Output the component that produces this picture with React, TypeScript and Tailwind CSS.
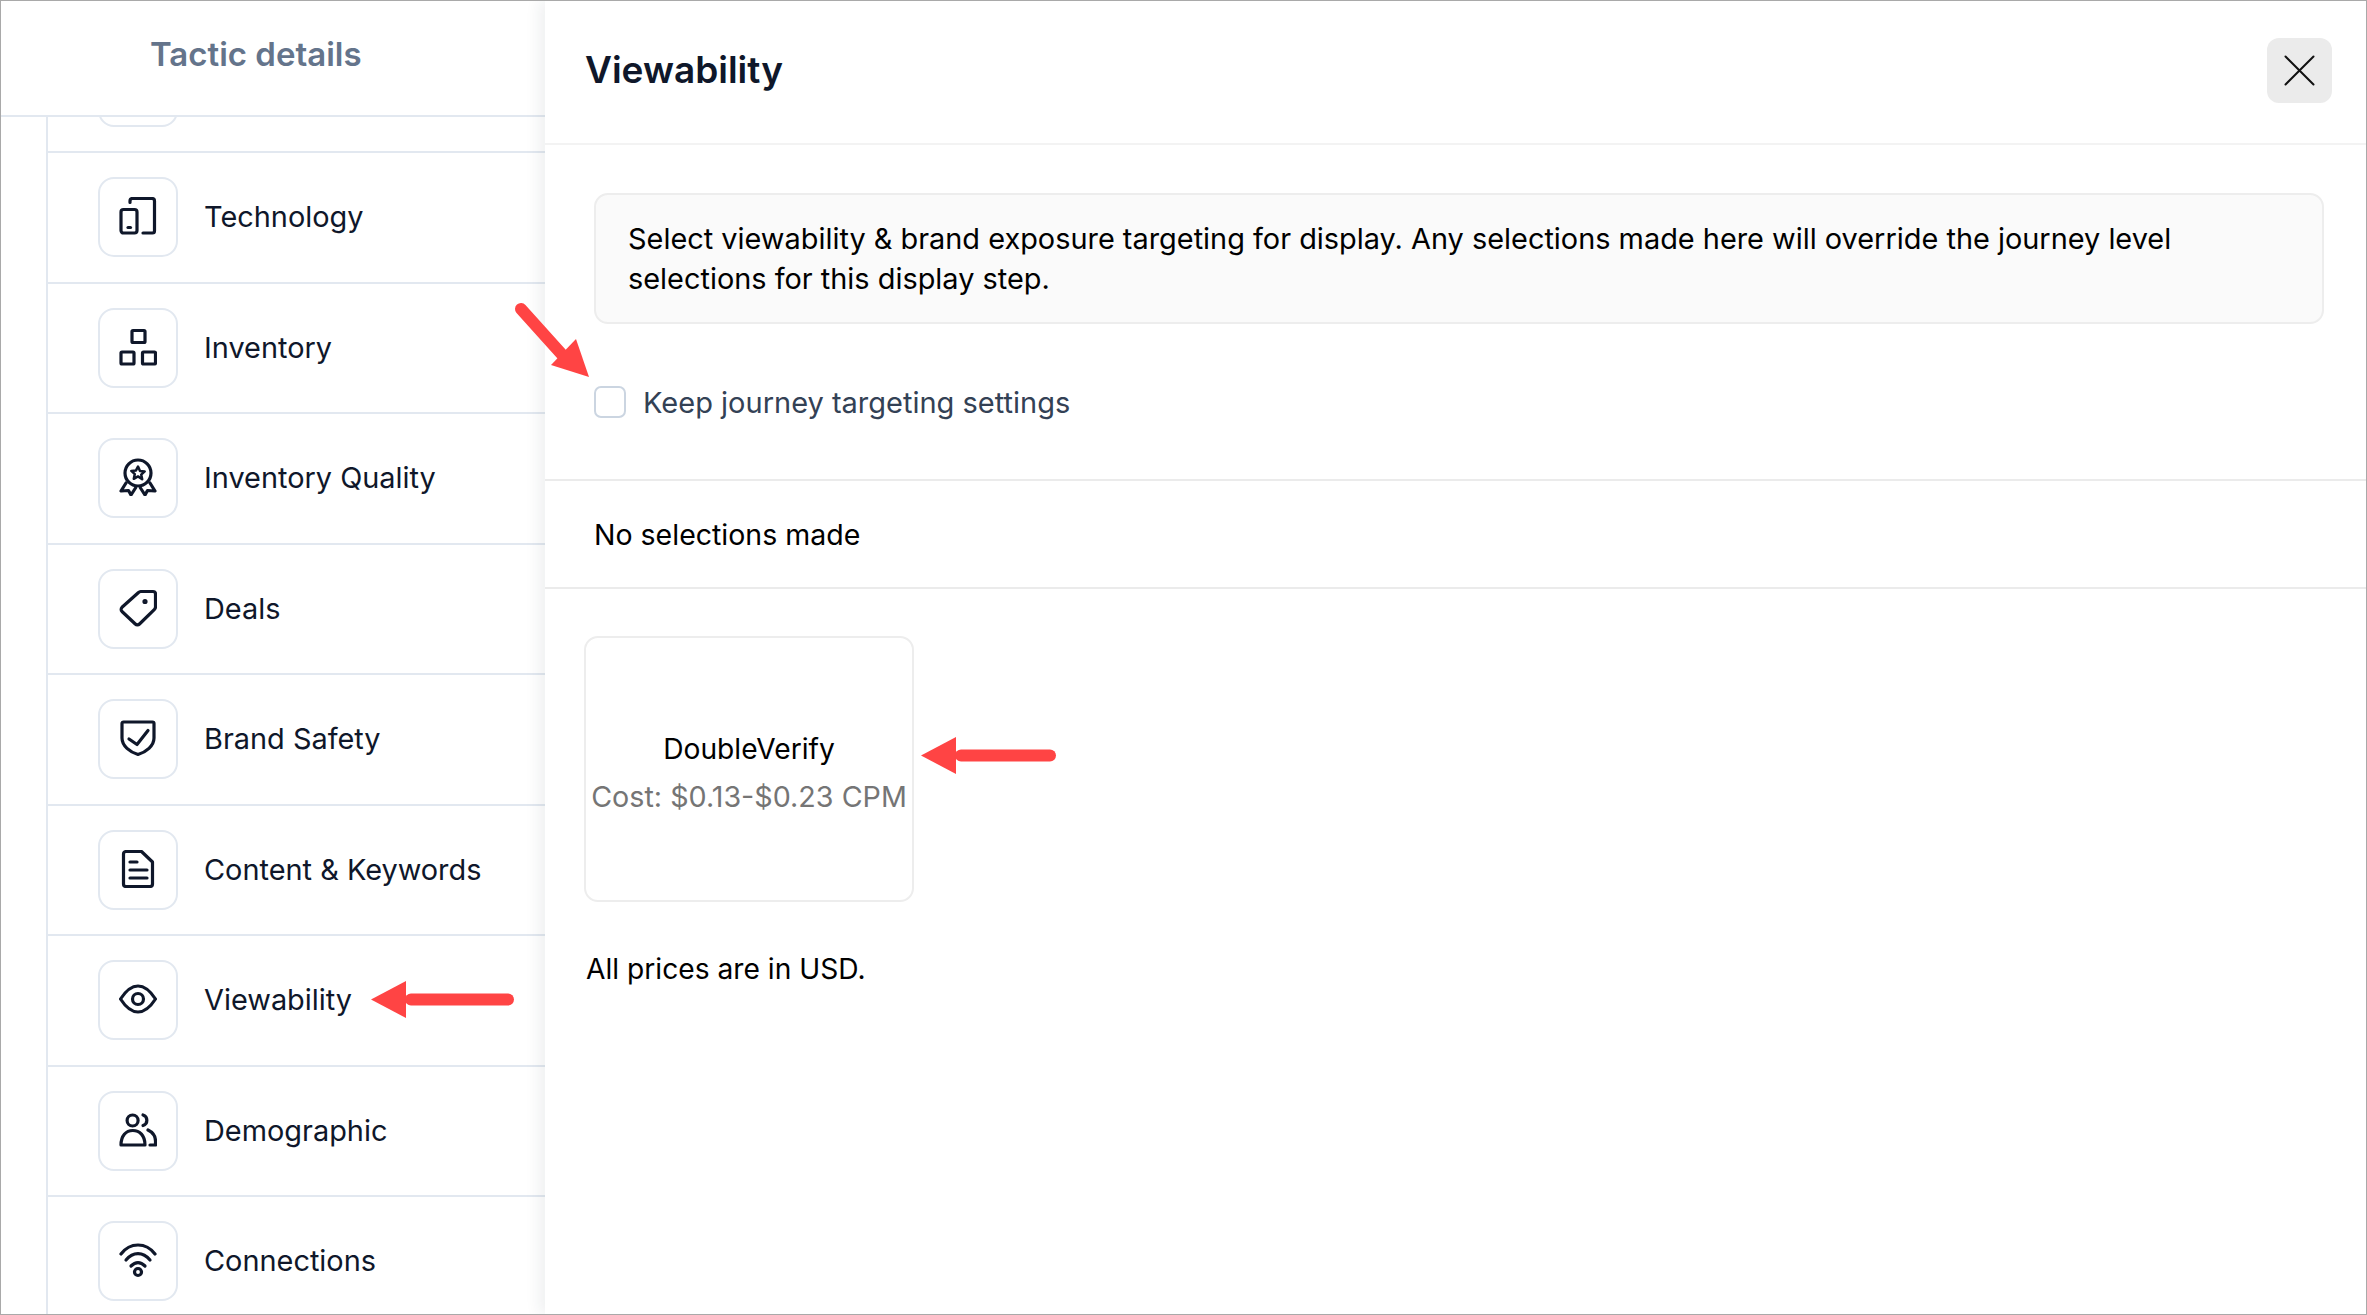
import React from "react";

const I = ({ children }: { children: React.ReactNode }) => (
  <svg width="38" height="38" viewBox="0 0 38 38" fill="none" stroke="#0f172a" strokeWidth="3.2" strokeLinecap="round" strokeLinejoin="round">
    {children}
  </svg>
);

const icons: Record<string, React.ReactNode> = {
  Technology: (
    <I>
      <path d="M11 5.5V4a2.5 2.5 0 0 1 2.5-2.5H33a2.5 2.5 0 0 1 2.5 2.5v30a2 2 0 0 1-2 2H24" />
      <rect x="2" y="12.5" width="16" height="23.5" rx="2.5" />
      <path d="M9 30.5h2.5" />
    </I>
  ),
  Inventory: (
    <I>
      <rect x="13" y="2.5" width="13" height="12" rx="1" />
      <rect x="2" y="24" width="13" height="12" rx="1" />
      <rect x="23.5" y="24" width="13" height="12" rx="1" />
    </I>
  ),
  "Inventory Quality": (
    <I>
      <circle cx="19" cy="15" r="13" />
      <path d="M19 8.5l2 4.4 4.7.5-3.5 3.2 1 4.7L19 18.4l-4.2 2.4 1-4.7-3.5-3.2 4.700-.5z" strokeWidth="2.5" />
      <path d="M7 25L2 33l7.5-.5L12 37l4.5-7" />
      <path d="M31 25l5 8-7.5-.5L26 37l-4.5-7" />
    </I>
  ),
  Deals: (
    <I>
      <path d="M22 2.5h12a2.5 2.5 0 0 1 2.5 2.5v13a3 3 0 0 1-1 2.3L20.5 35a3 3 0 0 1-4.2 0L3 22.5a3 3 0 0 1 0-4.2L19.5 3.5a3 3 0 0 1 2.5-1z" />
      <circle cx="26" cy="12.5" r="1" fill="#0f172a" />
    </I>
  ),
  "Brand Safety": (
    <I>
      <path d="M4.5 3h29A1.5 1.5 0 0 1 35 4.5V19c0 8-8 14-16 16.5C11 33 3 27 3 19V4.5A1.5 1.5 0 0 1 4.5 3z" />
      <path d="M10 20l8 5.500L29 11.500" />
    </I>
  ),
  "Content & Keywords": (
    <I>
      <path d="M7 1.5h15.5L33.5 12v22a2.5 2.5 0 0 1-2.5 2.5H7A2.5 2.5 0 0 1 4.500 34V4A2.500 2.500 0 0 1 7 1.500z" />
      <path d="M11 12h7M11 20h17M11 28h17" />
    </I>
  ),
  Viewability: (
    <I>
      <path d="M1.500 19C7 10.500 13 6 19 6s12 4.500 17.500 13C31 27.500 25 32 19 32S7 27.500 1.500 19z" />
      <circle cx="19" cy="19" r="5.500" />
    </I>
  ),
  Demographic: (
    <I>
      <circle cx="13.600" cy="9.500" r="5.500" />
      <path d="M24 4a5.500 5.500 0 0 1 0 10.500" />
      <path d="M2 34c0-9.500 5-14.500 11.800-14.500S26 24.500 26 34z" />
      <path d="M29 19c4 2 7.500 6 7.500 11v4H31" />
    </I>
  ),
  Connections: (
    <I>
      <path d="M2 13C11 1 27 1 36 13" />
      <path d="M7 19c7-8.500 17-8.500 24 0" />
      <path d="M12 25c4.500-4.500 9.500-4.500 14 0" />
      <circle cx="19" cy="31" r="3.500" />
    </I>
  ),
};

const labels = [
  "",
  "Technology",
  "Inventory",
  "Inventory Quality",
  "Deals",
  "Brand Safety",
  "Content & Keywords",
  "Viewability",
  "Demographic",
  "Connections",
];

function Row({ label }: { label: string }) {
  return (
    <div className="h-[130.5px] shrink-0 flex items-center gap-[26px] pl-[50px] border-b-2 border-[#e2e8f0] text-[#0f172a] text-[28.9px]">
      <div className="w-[80px] h-[80px] rounded-[16px] border-2 border-[#e2e8f0] flex items-center justify-center shrink-0 pb-[2px]">
        {icons[label]}
      </div>
      {label && <span>{label}</span>}
    </div>
  );
}

export default function App() {
  return (
    <div className="relative w-[2367px] h-[1315px] overflow-hidden flex bg-white border border-[#a9a9a9] font-['Inter',sans-serif] text-[28.9px] leading-[40px] text-black">
      {/* left */}
      <div className="w-[544px] shrink-0 flex flex-col h-full">
        <div className="h-[116px] shrink-0 border-b-2 border-[#e2e8f0] flex items-center pl-[149px] pb-[8px] relative z-10 bg-white">
          <span className="text-[#64748b] font-semibold text-[33px]">Tactic details</span>
        </div>
        <div className="flex-1 min-h-0 overflow-hidden">
          <div className="ml-[45px] border-l-2 border-[#e2e8f0] -mt-[94.5px] flex flex-col">
            {labels.map((l) => (
              <Row key={l} label={l} />
            ))}
          </div>
        </div>
      </div>

      {/* right */}
      <div className="flex-1 h-full flex flex-col bg-white relative z-10 shadow-[-6px_0_14px_rgba(30,41,59,0.07)]">
        <div className="h-[144px] shrink-0 border-b-2 border-[#f3f3f3] flex items-center justify-between pl-[40px] pr-[34px] pb-[4px]">
          <span className="font-semibold text-[37px] text-[#0f172a]">Viewability</span>
          <div className="w-[65px] h-[65px] rounded-[12px] bg-[#ebebeb] flex items-center justify-center">
            <svg width="31" height="31" viewBox="0 0 31 31" fill="none" stroke="#111" strokeWidth="2" strokeLinecap="round">
              <path d="M1.500 1.500l28 28M29.500 1.500l-28 28" />
            </svg>
          </div>
        </div>

        <div className="ml-[49px] mr-[42px] mt-[48px] h-[131px] rounded-[14px] border-2 border-[#ededed] bg-[#fafafa] pl-[32px] pt-[24px] pr-[120px]">
          Select viewability &amp; brand exposure targeting for display. Any selections made here will override the journey level selections for this display step.
        </div>

        <div className="ml-[49px] mt-[62px] h-[32px] flex items-center gap-[17px]">
          <div className="w-[32px] h-[32px] rounded-[7px] border-2 border-[#cbd5e1] bg-white" />
          <span className="text-[#334155] text-[29px] relative top-px">Keep journey targeting settings</span>
        </div>

        <div className="mt-[61px] h-[110px] border-y-2 border-[#ebebeb] pl-[49px] pt-[2px] flex items-center text-[28.5px]">
          No selections made
        </div>

        <div className="ml-[39px] mt-[47px] w-[330px] h-[266px] rounded-[14px] border-2 border-[#ededed] flex flex-col items-center justify-center gap-[8px] pt-[8px]">
          <span className="text-[28.2px]">DoubleVerify</span>
          <span className="text-[#757575] text-[28.7px] whitespace-nowrap">Cost: $0.13-$0.23 CPM</span>
        </div>

        <div className="ml-[41px] mt-[47px] text-[28.2px]">All prices are in USD.</div>
      </div>

      {/* annotation arrows */}
      <svg className="absolute left-[370px] top-[980px] z-20" width="146" height="38" viewBox="0 0 146 38" fill="#ff4444">
        <path d="M0 18.500L35 0v37z" />
        <rect x="34" y="12.500" width="109" height="12" rx="6" />
      </svg>
      <svg className="absolute left-[920px] top-[736px] z-20" width="138" height="38" viewBox="0 0 138 38" fill="#ff4444">
        <path d="M0 18.500L35 0v37z" />
        <rect x="34" y="12.500" width="101" height="12" rx="6" />
      </svg>
      <svg className="absolute left-[510px] top-[298px] z-20" width="84" height="84" viewBox="0 0 84 84" fill="none">
        <path d="M10 10L55 60" stroke="#ff4444" strokeWidth="12" strokeLinecap="round" />
        <path d="M78 78L65 40L40 66z" fill="#ff4444" />
      </svg>
    </div>
  );
}
